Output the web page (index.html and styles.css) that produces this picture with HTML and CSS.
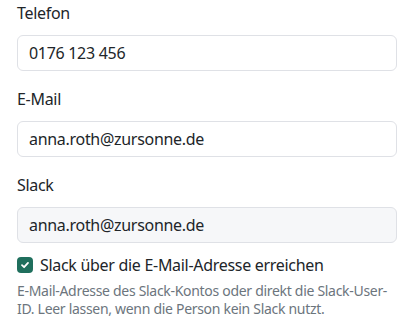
FILE: index.html
```html
<!DOCTYPE html>
<html lang="de">
<head>
<meta charset="utf-8">
<link rel="stylesheet" href="styles.css">
</head>
<body>
<form class="form">
  <div class="field">
    <label class="label" for="tel">Telefon</label>
    <input class="input" id="tel" type="text" value="0176 123 456">
  </div>
  <div class="field">
    <label class="label" for="mail">E-Mail</label>
    <input class="input" id="mail" type="text" value="anna.roth@zursonne.de">
  </div>
  <div class="field">
    <label class="label" for="slack">Slack</label>
    <input class="input input-muted" id="slack" type="text" value="anna.roth@zursonne.de">
  </div>
  <div class="check">
    <span class="box">
      <svg width="10" height="10" viewBox="0 0 10 10"><path d="M2 5.2 L4.1 7.2 L8 2.9" fill="none" stroke="#fff" stroke-width="1.8" stroke-linecap="round" stroke-linejoin="round"/></svg>
    </span>
    <span class="check-label">Slack über die E-Mail-Adresse erreichen</span>
  </div>
  <p class="help">E-Mail-Adresse des Slack-Kontos oder direkt die Slack-User-ID. Leer lassen, wenn die Person kein Slack nutzt.</p>
</form>
</body>
</html>
```
FILE: styles.css
```css
* { box-sizing: border-box; }
html, body { margin: 0; padding: 0; background: #fff; }
body {
  font-family: "Noto Sans", "DejaVu Sans", sans-serif;
  color: #212529;
  letter-spacing: -0.3px;
}
.form {
  padding: 1px 17px 0 17px;
  display: flex;
  flex-direction: column;
}
.field {
  display: flex;
  flex-direction: column;
  margin-bottom: 16px;
}
.label {
  font-size: 16px;
  line-height: 24px;
  margin-bottom: 10px;
}
.input {
  height: 36px;
  border: 1px solid #dfe1e6;
  border-radius: 6px;
  padding: 0 11px;
  font: inherit;
  font-size: 16px;
  letter-spacing: -0.3px;
  color: #212529;
  background: #fff;
  outline: none;
}
.input-muted { background: #f6f7f9; }
.check {
  display: flex;
  align-items: center;
  gap: 7px;
  margin-top: -6px;
}
.box {
  width: 16px;
  height: 16px;
  border-radius: 4px;
  background: #1f6f5d;
  display: flex;
  align-items: center;
  justify-content: center;
  flex: none;
}
.check-label { font-size: 16px; line-height: 24px; }
.help {
  margin: 5px 0 0 0;
  font-size: 14px;
  line-height: 17.5px;
  color: #6c757d;
  letter-spacing: -0.3px;
}
```
